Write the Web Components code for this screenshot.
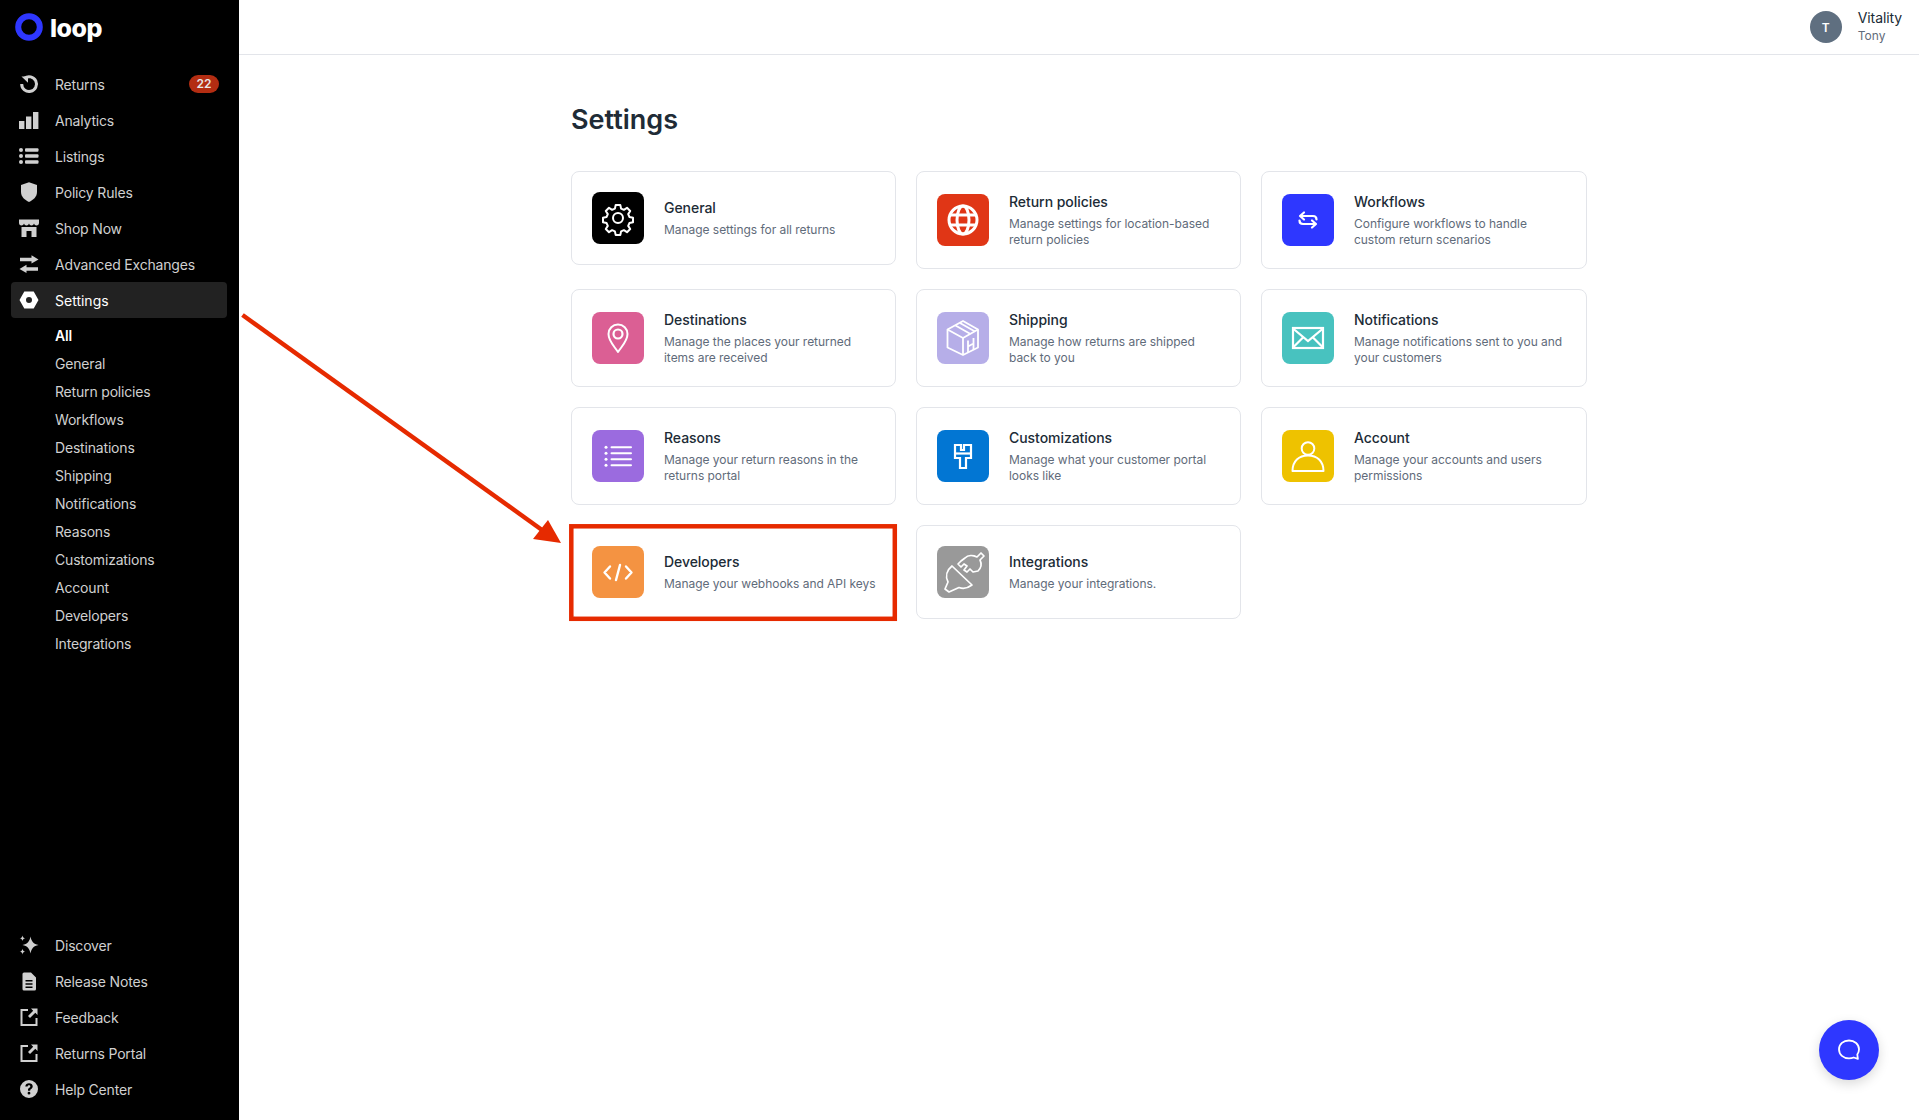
<!DOCTYPE html>
<html lang="en">
<head>
<meta charset="utf-8">
<title>Settings</title>
<style>
    html, body { margin: 0; height: 100%; }
    body { font-family: Inter, "Liberation Sans", sans-serif; background: #fff; overflow: hidden; }
</style>
</head>
<body>
<app-shell>
    <side-bar slot="side">
        <nav-item slot="top" label="Returns" icon="returns" badge="22"></nav-item>
        <nav-item slot="top" label="Analytics" icon="analytics"></nav-item>
        <nav-item slot="top" label="Listings" icon="listings"></nav-item>
        <nav-item slot="top" label="Policy Rules" icon="shield"></nav-item>
        <nav-item slot="top" label="Shop Now" icon="shop"></nav-item>
        <nav-item slot="top" label="Advanced Exchanges" icon="exchange"></nav-item>
        <nav-item slot="top" label="Settings" icon="settings" active></nav-item>
        <sub-item slot="top" label="All" current></sub-item>
        <sub-item slot="top" label="General"></sub-item>
        <sub-item slot="top" label="Return policies"></sub-item>
        <sub-item slot="top" label="Workflows"></sub-item>
        <sub-item slot="top" label="Destinations"></sub-item>
        <sub-item slot="top" label="Shipping"></sub-item>
        <sub-item slot="top" label="Notifications"></sub-item>
        <sub-item slot="top" label="Reasons"></sub-item>
        <sub-item slot="top" label="Customizations"></sub-item>
        <sub-item slot="top" label="Account"></sub-item>
        <sub-item slot="top" label="Developers"></sub-item>
        <sub-item slot="top" label="Integrations"></sub-item>
        <nav-item slot="bottom" label="Discover" icon="discover"></nav-item>
        <nav-item slot="bottom" label="Release Notes" icon="notes"></nav-item>
        <nav-item slot="bottom" label="Feedback" icon="external"></nav-item>
        <nav-item slot="bottom" label="Returns Portal" icon="external"></nav-item>
        <nav-item slot="bottom" label="Help Center" icon="help"></nav-item>
    </side-bar>
    <top-bar slot="head" org="Vitality" user="Tony"></top-bar>
    <settings-page slot="main" heading="Settings">
        <settings-card label="General" icon="gear" color="#000000">Manage settings for all returns</settings-card>
        <settings-card label="Return policies" icon="globe" color="#e03616">Manage settings for location-based return policies</settings-card>
        <settings-card label="Workflows" icon="swap" color="#2e37ff">Configure workflows to handle custom return scenarios</settings-card>
        <settings-card label="Destinations" icon="pin" color="#db5f94">Manage the places your returned items are received</settings-card>
        <settings-card label="Shipping" icon="box" color="#b6aee8">Manage how returns are shipped back to you</settings-card>
        <settings-card label="Notifications" icon="mail" color="#48c2bf">Manage notifications sent to you and your customers</settings-card>
        <settings-card label="Reasons" icon="list" color="#9b6bdf">Manage your return reasons in the returns portal</settings-card>
        <settings-card label="Customizations" icon="brush" color="#0276d3">Manage what your customer portal looks like</settings-card>
        <settings-card label="Account" icon="person" color="#eec200">Manage your accounts and users permissions</settings-card>
        <settings-card label="Developers" icon="code" color="#f49342">Manage your webhooks and API keys</settings-card>
        <settings-card label="Integrations" icon="plug" color="#999999">Manage your integrations.</settings-card>
    </settings-page>
    <chat-button slot="over"></chat-button>
    <call-out slot="over"></call-out>
</app-shell>

<script>
// sidebar icons, 20x20 box
const NAV_ICONS = {
    returns: '<path d="M5.5 4.300A7.400 7.400 0 1 1 2.700 10" fill="none" stroke="currentColor" stroke-width="3"/><path d="M2.500 2.500h6.500v6.200z" fill="currentColor"/>',
    analytics: '<rect x="0" y="11" width="5.400" height="8"/><rect x="7" y="6.500" width="5.400" height="12.500"/><rect x="14" y="2" width="5.400" height="17"/>',
    listings: '<circle cx="2" cy="4" r="2"/><circle cx="2" cy="10" r="2"/><circle cx="2" cy="16" r="2"/><rect x="6" y="2.200" width="13.500" height="3.600" rx="1"/><rect x="6" y="8.200" width="13.500" height="3.600" rx="1"/><rect x="6" y="14.200" width="13.500" height="3.600" rx="1"/>',
    shield: '<path d="M10 .3 L18 3 V10 C18 15 14 18 10 20 C6 18 2 15 2 10 V3 Z"/>',
    shop: '<path d="M0 1.500h20v3.500c0 1.700-1.300 2.500-2.500 2.500-1.200 0-2.200-.8-2.500-2-.3 1.200-1.300 2-2.500 2s-2.200-.8-2.500-2c-.3 1.200-1.300 2-2.500 2s-2.200-.8-2.500-2c-.3 1.200-1.300 2-2.500 2-1.200 0-2.500-.8-2.500-2.500z"/><path d="M2.500 9h15v10h-5v-6h-5v6h-5z"/>',
    exchange: '<path d="M1 3.800h11.500V1.200l7 4.200-7 4.200V7.200H1z"/><path d="M19 13.300H7.500v-2.600l-7 4.200 7 4.200v-2.400H19z"/>',
    settings: '<path fill-rule="evenodd" d="M5.300 1.500h9.400L19.500 10l-4.800 8.500H5.300L.5 10zM10 7a3 3 0 1 0 0 6 3 3 0 0 0 0-6z"/>',
    discover: '<path d="M11.500 1.500c.9 5 3 7.400 8 8.500-5 1.100-7.100 3.500-8 8.500-.9-5-3-7.400-8-8.500 5-1.100 7.100-3.500 8-8.500z"/><path d="M3.500 .5c.3 1.700 1 2.500 2.800 2.800-1.800.3-2.500 1.100-2.800 2.800-.3-1.700-1-2.500-2.800-2.800C2.500 3 3.200 2.200 3.500 .5zM3.500 13.800c.3 1.700 1 2.500 2.800 2.800-1.800.3-2.500 1.100-2.800 2.800-.3-1.700-1-2.500-2.800-2.800 1.800-.3 2.500-1.100 2.800-2.800z"/>',
    notes: '<path fill-rule="evenodd" d="M5 1.500h7l5 5v11.500a1.500 1.500 0 0 1-1.500 1.500H5A1.500 1.500 0 0 1 3.500 18V3A1.500 1.500 0 0 1 5 1.500zM6.500 9v1.600h7V9zM6.500 12.200v1.600h7v-1.600zM6.500 15.400V17h7v-1.600z"/>',
    external: '<path d="M9 3H2.500v15h15V11" fill="none" stroke="currentColor" stroke-width="2"/><path d="M12 1.500h6.500V8l-2.200-2.200-5.300 5.200L9 9l5.200-5.300z"/>',
    help: '<path fill-rule="evenodd" d="M10 1a9 9 0 1 1 0 18 9 9 0 0 1 0-18zM10 4.300c-2 0-3.500 1.200-3.700 3.100h2.300c.1-.7.6-1.100 1.400-1.100.8 0 1.300.4 1.300 1.100 0 .6-.3.9-1 1.400-.9.6-1.400 1.300-1.300 2.600v.4h2.200v-.3c0-.7.2-1 1-1.500.9-.6 1.500-1.400 1.500-2.700 0-1.800-1.500-3-3.700-3zM10 12.800a1.400 1.400 0 1 0 0 2.800 1.400 1.400 0 0 0 0-2.800z"/>'
};

// settings card icons, 52x52 box, white line art
const CARD_ICONS = {
    gear: '<g stroke-width="2" stroke-linejoin="round"><circle cx="26" cy="26" r="5"/><path d="M23.700 13h4.600l.8 3.600 2.800 1.200 3.100-2 3.200 3.200-2 3.100 1.200 2.800 3.600.8v4.600l-3.600.8-1.200 2.800 2 3.100-3.200 3.200-3.100-2-2.800 1.200-.8 3.600h-4.600l-.8-3.600-2.800-1.200-3.100 2-3.200-3.200 2-3.100-1.200-2.800-3.600-.8v-4.600l3.600-.8 1.200-2.800-2-3.100 3.200-3.200 3.100 2 2.800-1.200z"/></g>',
    globe: '<g stroke-width="3"><circle cx="26" cy="26" r="14"/><ellipse cx="26" cy="26" rx="6" ry="14"/><path d="M13 21h26M13 31h26"/></g>',
    swap: '<g stroke-width="2.200" stroke-linecap="round" stroke-linejoin="round"><path d="M22 18.500 18 22l4 3.500M18 22h13c2.300 0 3.500 1.200 3.500 3.500"/><path d="M30 26.500l4 3.500-4 3.500M34 30H21c-2.300 0-3.500-1.200-3.500-3.500"/></g>',
    pin: '<g stroke-width="2" stroke-linejoin="round"><path d="M26 40C22 34 16.500 29 16.500 22a9.500 9.500 0 0 1 19 0C35.500 29 30 34 26 40z"/><circle cx="26" cy="22" r="4.500" stroke-width="2.200"/></g>',
    box: '<g stroke-width="1.800" stroke-linejoin="round"><path d="M26 9 41 17.500v18L26 43 10.500 35.500v-18z"/><path d="M10.500 17.500 26 26l15-8.500M26 26v17"/><path d="M18.500 13.500 33.500 22M23 11l15 8.500"/><path d="M31 28.500v12M36.500 26v12M31 34.500l5.500-3"/></g>',
    mail: '<g stroke-width="2.200"><rect x="11" y="16" width="30" height="20"/><path d="M11 16.500 26 29l15-12.500M11 35.500l10.500-10.500M41 35.500 30.500 25"/></g>',
    list: '<circle cx="14" cy="17.300" r="1.500" fill="#fff" stroke="none"/><circle cx="14" cy="23.300" r="1.500" fill="#fff" stroke="none"/><circle cx="14" cy="29.300" r="1.500" fill="#fff" stroke="none"/><circle cx="14" cy="35.300" r="1.500" fill="#fff" stroke="none"/><g stroke-width="2" stroke-linecap="round"><path d="M19.500 17.300H39M19.500 23.300H39M19.500 29.300H39M19.500 35.300H39"/></g>',
    brush: '<g stroke-width="2.200"><path d="M18 15h6v5h3v-5h7v13h-5v10h-6V28h-5z"/><path d="M18 23.500h16"/></g>',
    person: '<g stroke-width="2" stroke-linejoin="round"><circle cx="26" cy="18.500" r="6.300"/><path d="M10.500 41c0-10 6.500-15.500 15.500-15.500S41.500 31 41.500 41z"/></g>',
    code: '<g stroke-width="2.400" stroke-linecap="round" stroke-linejoin="round"><path d="M18 20.500l-5.500 6 5.500 6M34 20.500l5.500 6-5.500 6M28 19l-4 15"/></g>',
    plug: '<g stroke-width="1.700" stroke-linejoin="round"><path d="M15 20 35 39c-4 3-9 4-13 2.500L12 46l-4-3 3-7C8 30 10 24 15 20z"/><path d="M28 12c3-3 8-3 12-1l4-4 3 3-4 4c2 4 1 8-2 11l-5 1-3-3-3 3-3-2 3-4-3-2-3 3-3-3 3-3z"/></g>'
};

class AppShell extends HTMLElement {
    constructor() {
        super();
        this.attachShadow({ mode: "open" }).innerHTML = `
            <style>
                :host { display: grid; grid-template-columns: 239px 1fr; grid-template-rows: 55px 1fr; height: 1120px; position: relative; }
                .side { grid-row: 1 / 3; min-height: 0; display: flex; }
                .head { min-width: 0; }
                .main { min-width: 0; }
            </style>
            <div class="side"><slot name="side"></slot></div>
            <div class="head"><slot name="head"></slot></div>
            <div class="main"><slot name="main"></slot></div>
            <slot name="over"></slot>
        `;
    }
}

class SideBar extends HTMLElement {
    constructor() {
        super();
        this.attachShadow({ mode: "open" }).innerHTML = `
            <style>
                :host { display: flex; flex-direction: column; justify-content: space-between; width: 239px; background: #000; padding-bottom: 13px; box-sizing: border-box; }
                .logo { display: flex; align-items: center; height: 54px; padding-left: 15px; gap: 7px; margin-bottom: 12px; }
                .word { color: #fff; font: 800 25px/1 Inter, "Liberation Sans", sans-serif; letter-spacing: -.5px; position: relative; top: 1px; }
                .list { display: flex; flex-direction: column; padding: 0 12px 0 11px; }
            </style>
            <div>
                <div class="logo">
                    <svg width="28" height="28" viewBox="0 0 28 28"><circle cx="14" cy="14" r="10.800" fill="none" stroke="#2e37ff" stroke-width="6"/></svg>
                    <span class="word">loop</span>
                </div>
                <div class="list"><slot name="top"></slot></div>
            </div>
            <div class="list"><slot name="bottom"></slot></div>
        `;
    }
}

class NavItem extends HTMLElement {
    constructor() {
        super();
        this.attachShadow({ mode: "open" });
    }

    connectedCallback() {
        const label = this.getAttribute('label');
        const badge = this.getAttribute('badge');
        this.shadowRoot.innerHTML = `
            <style>
                :host { display: flex; align-items: center; height: 36px; padding: 0 8px; border-radius: 4px; color: #d0d0d0; font-size: 14px; letter-spacing: -.18px; }
                :host([active]) { background: #222; color: #fff; letter-spacing: 0; }
                svg { width: 20px; height: 20px; fill: currentColor; margin-right: 16px; flex: none; }
                .badge { margin-left: auto; width: 30px; height: 18px; line-height: 18px; text-align: center; border-radius: 9px; background: #b32d12; color: #e8e8e8; font-size: 12px; font-weight: 600; letter-spacing: 0; }
            </style>
            <svg viewBox="0 0 20 20">${NAV_ICONS[this.getAttribute('icon')]}</svg>
            <span>${label}</span>
            ${badge ? `<span class="badge">${badge}</span>` : ''}
        `;
    }
}

class SubItem extends HTMLElement {
    constructor() {
        super();
        this.attachShadow({ mode: "open" });
    }

    connectedCallback() {
        this.shadowRoot.innerHTML = `
            <style>
                :host { display: block; height: 28px; line-height: 28px; padding-left: 44px; color: #d0d0d0; font-size: 14px; letter-spacing: -.18px; }
                :host([current]) { color: #fff; font-weight: 600; margin-top: 4px; }
            </style>
            ${this.getAttribute('label')}
        `;
    }
}

class TopBar extends HTMLElement {
    constructor() {
        super();
        this.attachShadow({ mode: "open" });
    }

    connectedCallback() {
        this.shadowRoot.innerHTML = `
            <style>
                :host { display: flex; justify-content: flex-end; align-items: center; gap: 16px; height: 55px; box-sizing: border-box; border-bottom: 1px solid #e3e5ea; padding-right: 17px; }
                .avatar { width: 32px; height: 32px; border-radius: 50%; background: #5f6f80; color: #fff; font-size: 12px; font-weight: 600; display: flex; align-items: center; justify-content: center; }
                .who { display: flex; flex-direction: column; }
                .org { font-size: 14px; line-height: 18px; color: #202b36; letter-spacing: -.1px; }
                .user { font-size: 12px; line-height: 18px; color: #5f6b7a; }
            </style>
            <div class="avatar">T</div>
            <div class="who">
                <span class="org">${this.getAttribute('org')}</span>
                <span class="user">${this.getAttribute('user')}</span>
            </div>
        `;
    }
}

class SettingsPage extends HTMLElement {
    constructor() {
        super();
        this.attachShadow({ mode: "open" });
    }

    connectedCallback() {
        this.shadowRoot.innerHTML = `
            <style>
                :host { display: block; width: 1016px; margin: 0 auto; padding-top: 47px; }
                h1 { margin: 0 0 33px; font-size: 27px; line-height: 36px; font-weight: 600; color: #202b36; }
                .grid { display: grid; grid-template-columns: 325px 325px 326px; gap: 20px; align-items: start; }
            </style>
            <h1>${this.getAttribute('heading')}</h1>
            <div class="grid"><slot></slot></div>
        `;
    }
}

class SettingsCard extends HTMLElement {
    constructor() {
        super();
        this.attachShadow({ mode: "open" });
    }

    connectedCallback() {
        const color = this.getAttribute('color');
        this.shadowRoot.innerHTML = `
            <style>
                :host { display: flex; align-items: center; gap: 20px; padding: 20px 18px 20px 20px; box-sizing: border-box; border: 1px solid #e3e5ea; border-radius: 8px; background: #fff; }
                .tile { flex: none; width: 52px; height: 52px; border-radius: 8px; background: ${color}; }
                svg { display: block; fill: none; stroke: #fff; }
                .label { font-size: 14px; line-height: 20px; font-weight: 500; color: #202b36; margin-bottom: 4px; letter-spacing: -.05px; }
                .desc { font-size: 12px; line-height: 16px; color: #5f6b7a; letter-spacing: -.04px; }
            </style>
            <div class="tile"><svg width="52" height="52" viewBox="0 0 52 52" stroke-width="1.800">${CARD_ICONS[this.getAttribute('icon')]}</svg></div>
            <div>
                <div class="label">${this.getAttribute('label')}</div>
                <div class="desc"><slot></slot></div>
            </div>
        `;
    }
}

class ChatButton extends HTMLElement {
    constructor() {
        super();
        this.attachShadow({ mode: "open" }).innerHTML = `
            <style>
                :host { position: absolute; left: 1819px; top: 1020px; width: 60px; height: 60px; border-radius: 50%; background: #2e37ff; box-shadow: 0 4px 12px rgba(0,0,0,.15); display: flex; align-items: center; justify-content: center; }
            </style>
            <svg width="24" height="24" viewBox="0 0 24 24" fill="none" stroke="#fff" stroke-width="1.800" stroke-linejoin="round">
                <path d="M12 2.500c5.600 0 10 3.800 10 8.800 0 2-.6 3.700-1.700 5.200l.6 4.300-4.200-1.300c-1.400.6-3 .9-4.700.9-5.600 0-10-3.600-10-9.100S6.400 2.500 12 2.500z"/>
            </svg>
        `;
    }
}

// the red annotation drawn on top of the screenshot: arrow and box round Developers
class CallOut extends HTMLElement {
    constructor() {
        super();
        this.attachShadow({ mode: "open" }).innerHTML = `
            <style>
                :host { position: absolute; inset: 0; pointer-events: none; }
                svg { position: absolute; left: 0; top: 0; }
            </style>
            <svg width="1919" height="1120" viewBox="0 0 1919 1120">
                <path d="M242.500 315 L542 530" stroke="#e62a00" stroke-width="4.500" fill="none"/>
                <path d="M548 520 L533 539 L561 543z" fill="#e62a00"/>
                <rect x="571.300" y="526.300" width="323.500" height="92.500" fill="none" stroke="#e62a00" stroke-width="4.500"/>
            </svg>
        `;
    }
}

customElements.define("app-shell", AppShell);
customElements.define("side-bar", SideBar);
customElements.define("nav-item", NavItem);
customElements.define("sub-item", SubItem);
customElements.define("top-bar", TopBar);
customElements.define("settings-page", SettingsPage);
customElements.define("settings-card", SettingsCard);
customElements.define("chat-button", ChatButton);
customElements.define("call-out", CallOut);
</script>
</body>
</html>
